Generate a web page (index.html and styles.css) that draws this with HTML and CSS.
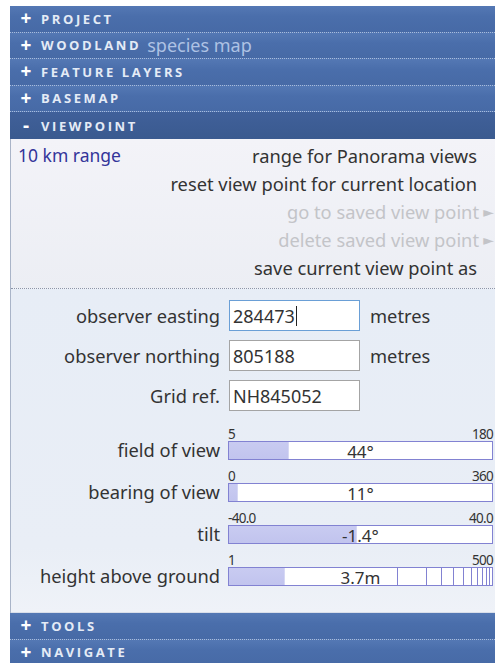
FILE: index.html
```html
<!DOCTYPE html>
<html lang="en">
<head>
<meta charset="utf-8">
<title>Viewpoint</title>
<link rel="stylesheet" href="styles.css">
</head>
<body>
<div class="panel">
  <div class="hd"><span class="sign">+</span>PROJECT</div>
  <div class="hd"><span class="sign">+</span>WOODLAND <span class="sub-title">species map</span></div>
  <div class="hd"><span class="sign">+</span>FEATURE LAYERS</div>
  <div class="hd"><span class="sign">+</span>BASEMAP</div>
  <div class="hd open"><span class="sign">-</span>VIEWPOINT</div>

  <div class="body">
    <div class="menu">
      <div class="item split"><span class="link">10 km range</span><span>range for Panorama views</span></div>
      <div class="item">reset view point for current location</div>
      <div class="item disabled">go to saved view point<span class="arrow">&#9658;</span></div>
      <div class="item disabled">delete saved view point<span class="arrow">&#9658;</span></div>
      <div class="item">save current view point as</div>
    </div>

    <div class="form">
      <div class="frow">
        <label class="lbl">observer easting</label>
        <div class="input focus">284473<span class="caret"></span></div>
        <span class="unit">metres</span>
      </div>
      <div class="frow">
        <label class="lbl">observer northing</label>
        <div class="input">805188</div>
        <span class="unit">metres</span>
      </div>
      <div class="frow">
        <label class="lbl">Grid ref.</label>
        <div class="input">NH845052</div>
      </div>

      <div class="sliders">
        <div class="srow">
          <span class="lbl">field of view</span>
          <div class="slider">
            <div class="scale"><span>5</span><span>180</span></div>
            <div class="bar"><div class="fill" style="width:22.5%"></div><span class="val">44°</span></div>
          </div>
        </div>
        <div class="srow">
          <span class="lbl">bearing of view</span>
          <div class="slider">
            <div class="scale"><span>0</span><span>360</span></div>
            <div class="bar"><div class="fill" style="width:3.1%"></div><span class="val">11°</span></div>
          </div>
        </div>
        <div class="srow">
          <span class="lbl">tilt</span>
          <div class="slider">
            <div class="scale"><span>-40.0</span><span>40.0</span></div>
            <div class="bar"><div class="fill" style="width:48.2%"></div><span class="val">-1.4°</span></div>
          </div>
        </div>
        <div class="srow">
          <span class="lbl">height above ground</span>
          <div class="slider">
            <div class="scale"><span>1</span><span>500</span></div>
            <div class="bar"><div class="fill" style="width:21%"></div><span class="val">3.7m</span>
              <i class="tick" style="left:63.9%"></i>
              <i class="tick" style="left:74.8%"></i>
              <i class="tick" style="left:80.5%"></i>
              <i class="tick" style="left:85.3%"></i>
              <i class="tick" style="left:89.1%"></i>
              <i class="tick" style="left:92.1%"></i>
              <i class="tick" style="left:94.4%"></i>
              <i class="tick" style="left:96.2%"></i>
              <i class="tick" style="left:97.7%"></i>
              <i class="tick" style="left:98.9%"></i>
            </div>
          </div>
        </div>
      </div>
    </div>
  </div>

  <div class="hd"><span class="sign">+</span>TOOLS</div>
  <div class="hd"><span class="sign">+</span>NAVIGATE</div>
</div>
</body>
</html>
```

FILE: styles.css
```css
html, body {
  margin: 0;
  padding: 0;
  background: #fff;
}

body {
  font-family: "Noto Sans", "Open Sans", "DejaVu Sans", sans-serif;
  color: #333;
  overflow: hidden;
}

.panel {
  margin: 6px 0 0 10px;
  display: flex;
  flex-direction: column;
}

/* accordion headers */
.hd {
  height: 25.5px;
  display: flex;
  align-items: center;
  padding-left: 9px;
  background: linear-gradient(#5478b4, #4a6eab 40%, #476aa6);
  border-bottom: 1px dotted #a9bcdc;
  color: #e4ebf6;
  font-family: "Open Sans", "Noto Sans", sans-serif;
  font-size: 13px;
  font-weight: 700;
  letter-spacing: 2.6px;
}

.hd.open {
  background: linear-gradient(#40609a, #3a5a8f);
  border-bottom: none;
  height: 27px;
}

.sign {
  width: 14px;
  margin-right: 8px;
  color: #fff;
  font-size: 19px;
  font-weight: 700;
  letter-spacing: 0;
  text-align: center;
  line-height: 1;
}

.sub-title {
  margin-left: 6px;
  font-family: "Noto Sans", sans-serif;
  font-size: 18px;
  font-weight: 400;
  letter-spacing: 0;
  color: #aec2e4;
}

/* expanded section */
.body {
  border-left: 1px solid #a9b4c8;
  background: #eef0f6;
}

.menu {
  padding: 2px 18px 7px 7px;
  background: linear-gradient(#f3f3f8, #eceef4);
  border-bottom: 1px dotted #8c95a8;
}

.item {
  height: 28px;
  display: flex;
  align-items: center;
  justify-content: flex-end;
  font-size: 18.3px;
  color: #333;
}

.item.split {
  justify-content: space-between;
}

.link {
  color: #33359a;
  font-size: 17.5px;
}

.item.disabled {
  color: #c3c4c8;
}

.arrow {
  width: 15px;
  margin-right: -17px;
  font-size: 14px;
  text-align: right;
  color: #c3c4c8;
}

/* observer form */
.form {
  background: linear-gradient(#e7edf6, #e9eef6 80%, #eff2f8);
  padding: 11px 2px 26px 0;
  border-bottom: 1px solid #d9dfea;
}

.frow {
  display: grid;
  grid-template-columns: 209px 131px auto;
  column-gap: 9px;
  align-items: center;
  margin-bottom: 9px;
  font-size: 18.3px;
}

.lbl {
  text-align: right;
  font-size: 18.3px;
  color: #333;
}

.unit {
  margin-left: 1px;
  color: #333;
}

.input {
  height: 31px;
  box-sizing: border-box;
  border: 1px solid #a4a4a4;
  background: #fff;
  padding: 0 3px;
  display: flex;
  align-items: center;
  font-size: 18px;
  color: #333;
}

.input.focus {
  border-color: #6a9fd6;
}

.caret {
  width: 1px;
  height: 20px;
  background: #222;
  margin-left: 1px;
}

/* sliders */
.sliders {
  margin-top: 17px;
  display: flex;
  flex-direction: column;
  gap: 10px;
}

.srow {
  display: grid;
  grid-template-columns: 209px 1fr;
  column-gap: 8px;
  align-items: end;
}

.srow .lbl {
  line-height: 20px;
}

.scale {
  display: flex;
  justify-content: space-between;
  font-size: 13.5px;
  line-height: 13px;
  color: #333;
  letter-spacing: -0.7px;
}

.bar {
  position: relative;
  height: 19px;
  box-sizing: border-box;
  border: 1px solid #8282d2;
  background: #fff;
  display: flex;
  align-items: center;
  justify-content: center;
}

.fill {
  position: absolute;
  left: 0;
  top: 0;
  bottom: 0;
  background: linear-gradient(#c9cbf1, #c1c4ee);
  border-right: 1px solid #d6d8f4;
}

.val {
  position: relative;
  font-size: 17px;
  line-height: 1;
  margin-top: 1px;
  color: #333;
}

.tick {
  position: absolute;
  top: 0;
  bottom: 0;
  width: 1px;
  background: #8282d2;
}
```
